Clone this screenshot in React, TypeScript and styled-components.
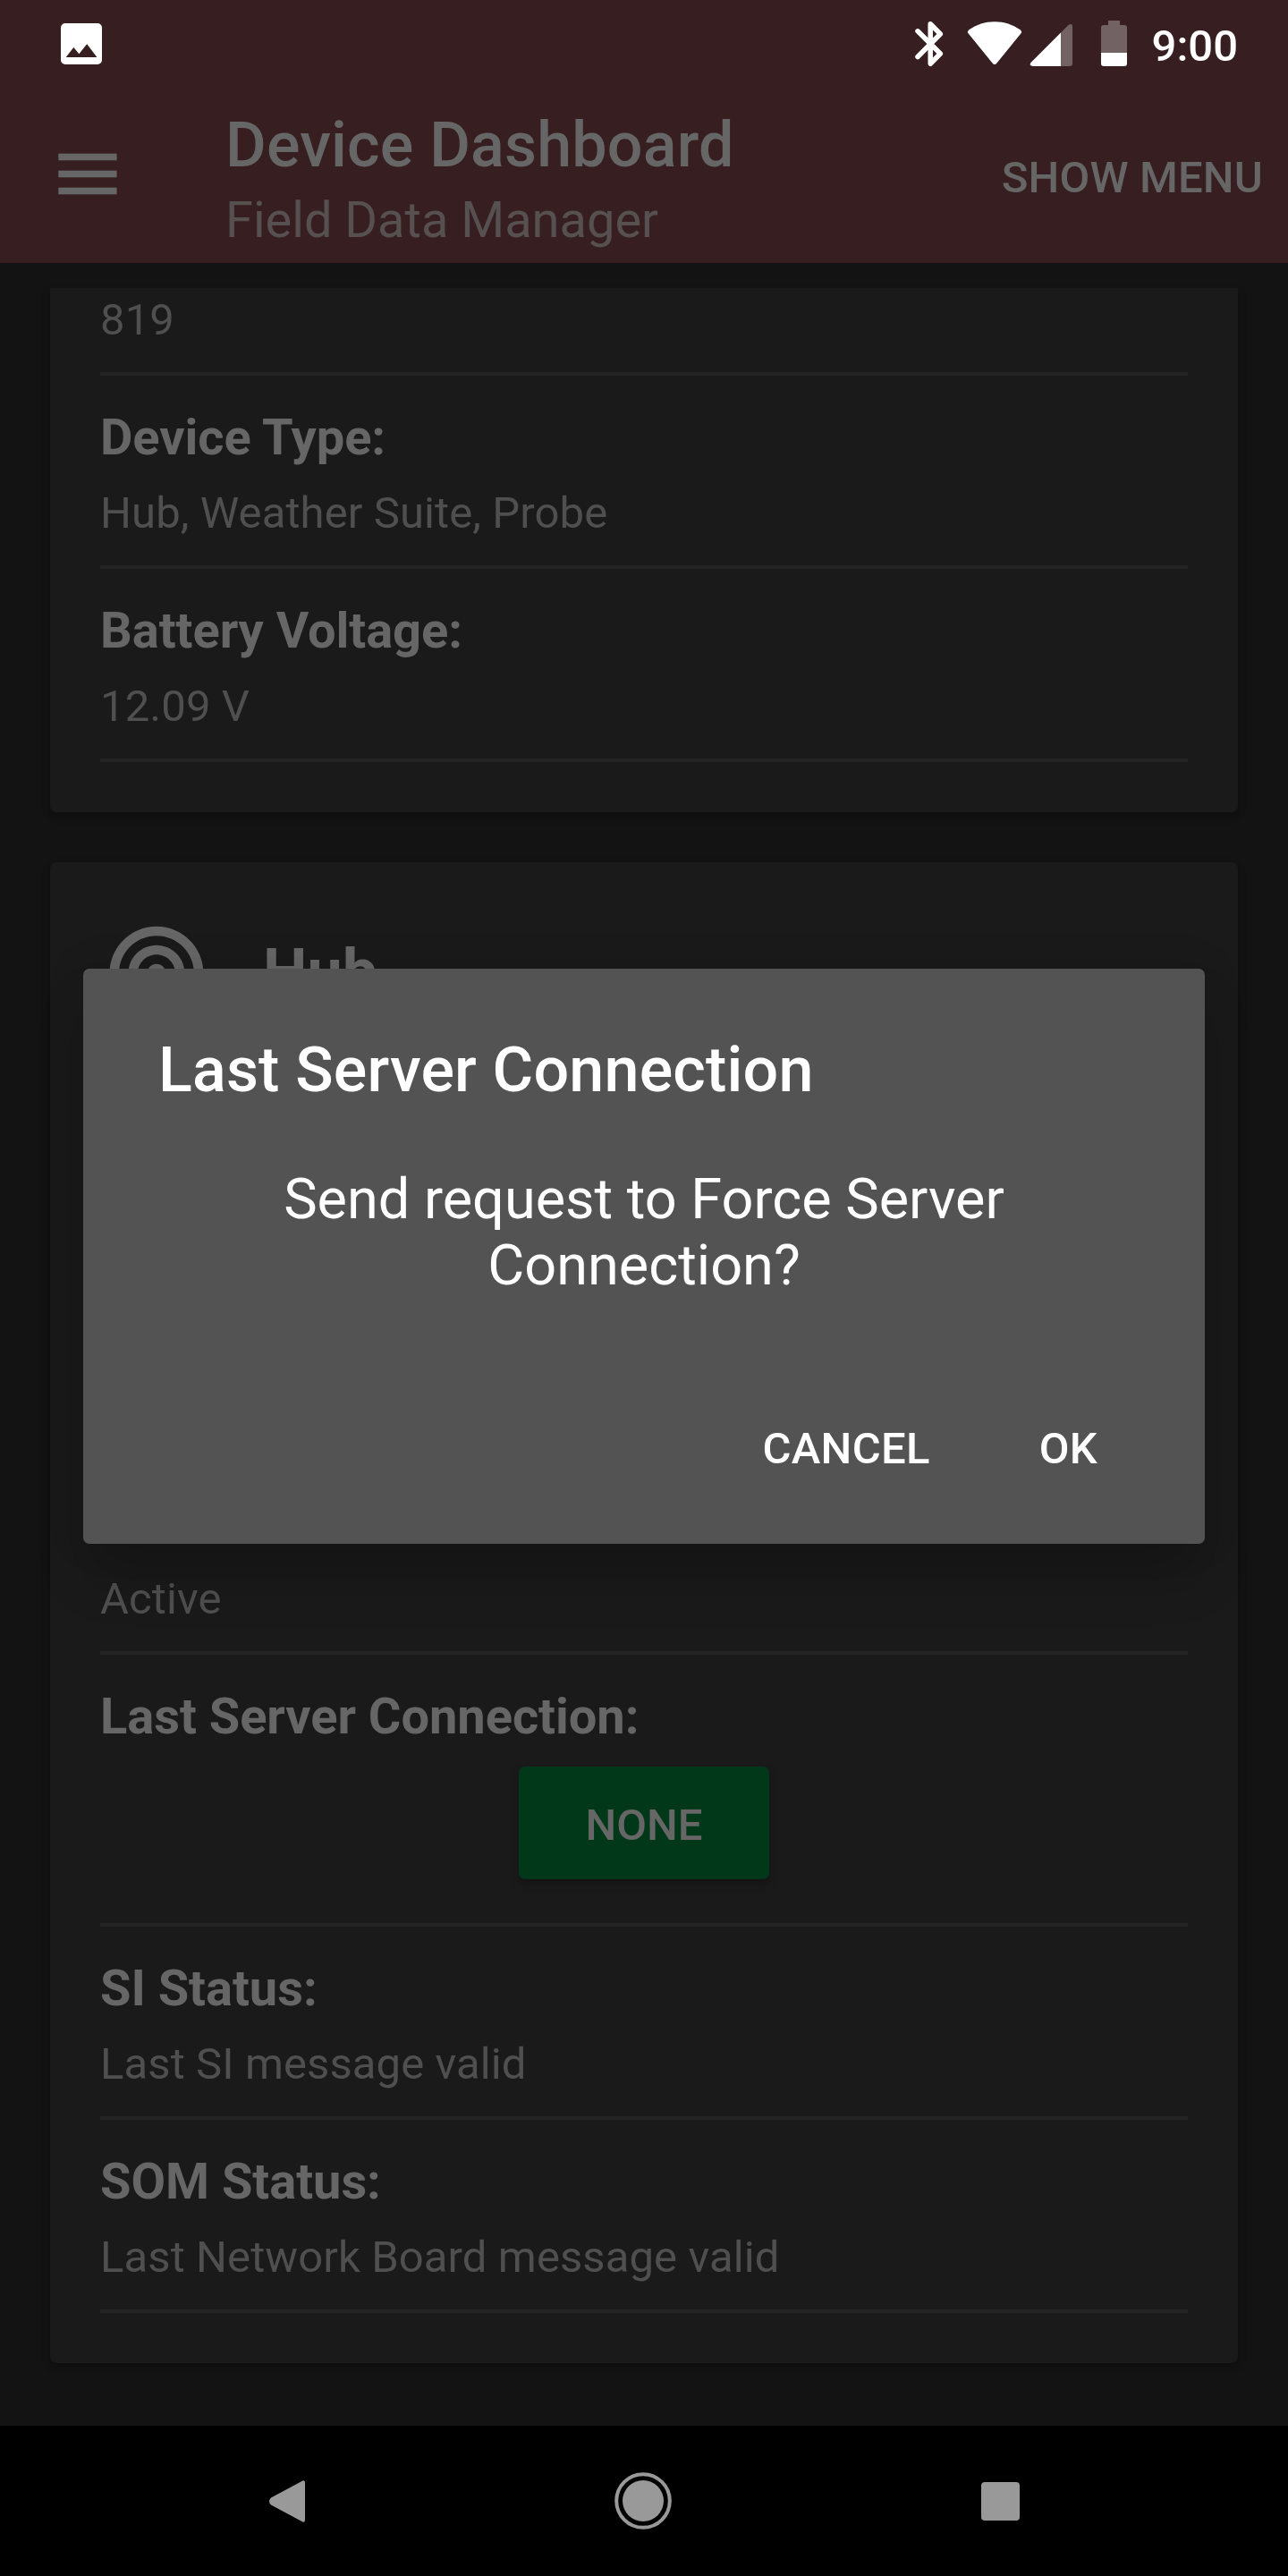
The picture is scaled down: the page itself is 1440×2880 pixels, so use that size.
import React from "react";
import styled, { createGlobalStyle } from "styled-components";
import { MdWifiTethering } from "react-icons/md";

const GlobalStyle = createGlobalStyle`
  html, body { margin: 0; padding: 0; background: #131313; }
  * { box-sizing: border-box; }
  button { font: inherit; border: 0; background: none; padding: 0; margin: 0; }
`;

const Screen = styled.div`
  position: relative;
  width: 1440px;
  height: 2880px;
  overflow: hidden;
  display: flex;
  flex-direction: column;
  background: #131313;
  font-family: Roboto, "Noto Sans", sans-serif;
  font-size: 49px;
  color: #666;
`;

const StatusBar = styled.div`
  height: 98px;
  flex: none;
  display: flex;
  align-items: flex-start;
  justify-content: space-between;
  padding: 0 56px 0 68px;
  background: #371f21;
  color: #fff;
`;

const StatusIcons = styled.div`
  display: flex;
  align-items: flex-start;
`;

const Clock = styled.span`
  margin-left: 26px;
  padding-top: 23px;
  font-size: 49px;
  line-height: 58px;
  font-weight: 500;
  color: #fff;
`;

const Toolbar = styled.header`
  height: 196px;
  flex: none;
  display: flex;
  align-items: flex-start;
  padding: 0 28px 0 65px;
  background: #371f21;
`;

const MenuButton = styled.button`
  width: 187px;
  padding-top: 73px;
  display: flex;
`;

const Titles = styled.div`
  flex: 1;
  padding-top: 23px;
`;

const Title = styled.h1`
  margin: 0;
  font-size: 70px;
  line-height: 82px;
  font-weight: 500;
  letter-spacing: 0.2px;
  color: #666;
`;

const Subtitle = styled.div`
  margin-top: 10px;
  font-size: 56px;
  line-height: 66px;
  color: #575050;
`;

const ShowMenu = styled.button`
  padding-top: 72px;
  font-size: 49px;
  line-height: 58px;
  font-weight: 500;
  letter-spacing: 0.15px;
  color: #666;
`;

const Content = styled.main`
  flex: 1;
  display: flex;
  flex-direction: column;
  gap: 56px;
  padding: 28px 56px 0;
`;

const Card = styled.section<{ $clipped?: boolean }>`
  display: flex;
  flex-direction: column;
  padding: ${(p) => (p.$clipped ? "7px" : "56px")} 56px 56px;
  border-radius: ${(p) => (p.$clipped ? "0 0 7px 7px" : "7px")};
  background: #1a1a1a;
  box-shadow: 0 4px 10px rgba(0, 0, 0, 0.3);
`;

const CardHeader = styled.div`
  height: 126px;
  margin-bottom: 613px;
  display: flex;
  gap: 56px;
  color: #666;
`;

const CardTitle = styled.h2`
  margin: 0;
  padding-top: 25px;
  font-size: 70px;
  line-height: 82px;
  font-weight: 700;
`;

const Field = styled.div<{ $short?: boolean }>`
  display: flex;
  flex-direction: column;
  gap: 23px;
  padding: ${(p) => (p.$short ? "0" : "36px")} 0 29px;
  border-bottom: 4px solid #242424;
`;

const ActionField = styled(Field)`
  padding-bottom: 49px;
`;

const Label = styled.div`
  font-size: 56px;
  line-height: 66px;
  font-weight: 700;
  letter-spacing: -0.04px;
  color: #666;
`;

const Value = styled.div`
  font-size: 49px;
  line-height: 58px;
  letter-spacing: 0.1px;
  color: #4f4f4f;
`;

const GreenButton = styled.button`
  align-self: center;
  width: 280px;
  height: 126px;
  padding-top: 4px;
  border-radius: 7px;
  background: #003819;
  font-size: 49px;
  font-weight: 500;
  color: #666;
  box-shadow: 0 5px 8px rgba(0, 0, 0, 0.25);
`;

const NavBar = styled.nav`
  height: 168px;
  flex: none;
  display: flex;
  align-items: center;
  justify-content: space-between;
  padding: 0 300px 0 301px;
  background: #000;
`;

const Dialog = styled.div`
  position: absolute;
  left: 93px;
  top: 1083px;
  width: 1254px;
  height: 643px;
  display: flex;
  flex-direction: column;
  padding: 72px 84px 0;
  border-radius: 7px;
  background: #535353;
  color: #fff;
  box-shadow: 0 40px 60px -6px rgba(0, 0, 0, 0.2), 0 0 50px rgba(0, 0, 0, 0.08);
`;

const DialogTitle = styled.h2`
  margin: 0;
  font-size: 70px;
  line-height: 82px;
  font-weight: 500;
  letter-spacing: 0.18px;
`;

const Message = styled.p`
  margin: 67px 0 0;
  font-size: 63px;
  line-height: 73.5px;
  text-align: center;
`;

const Actions = styled.div`
  display: flex;
  justify-content: flex-end;
  gap: 122px;
  margin-top: 140px;
  padding-right: 36px;
`;

const TextButton = styled.button`
  font-size: 49px;
  line-height: 58px;
  font-weight: 500;
  letter-spacing: 0.3px;
  color: #fff;
`;

const deviceFields = [
  { label: "Device Type:", value: "Hub, Weather Suite, Probe" },
  { label: "Battery Voltage:", value: "12.09 V" },
];

const statusFields = [
  { label: "SI Status:", value: "Last SI message valid" },
  { label: "SOM Status:", value: "Last Network Board message valid" },
];

function PhotoIcon() {
  return (
    <svg width="46" height="98" viewBox="68 0 46 98">
      <path
        fill="#fff"
        fillRule="evenodd"
        d="M73 26H109a5 5 0 0 1 5 5V67a5 5 0 0 1-5 5H73a5 5 0 0 1-5-5V31a5 5 0 0 1 5-5ZM73.7 64H108.4L97.2 49.3 88.4 60.3 82.3 53Z"
      />
    </svg>
  );
}

function SignalIcons() {
  return (
    <svg width="240" height="98" viewBox="1022 0 240 98" fill="#fff">
      <path
        d="M1026 34.800 1051.300 60 1040.200 71.300V26.700L1051.300 38 1026 63.500"
        fill="none"
        stroke="#fff"
        strokeWidth="5.500"
        strokeLinejoin="round"
        strokeLinecap="round"
      />
      <path d="M1083 33.500C1100 21 1124 21 1141 33.500Q1143 35.500 1141.300 37.500L1114.500 70.500Q1112 73.500 1109.500 70.500L1082.700 37.500Q1081 35.500 1083 33.500Z" />
      <path
        opacity="0.3"
        d="M1186 36.500 1194.500 28Q1199 25 1199 30V71Q1199 74 1196 74H1186Z"
      />
      <path d="M1186 36.500V74H1155Q1150 73.500 1152.500 70Z" />
      <path
        opacity="0.3"
        d="M1239 23H1252V28H1257Q1260 28 1260 31V59H1231V31Q1231 28 1234 28H1239Z"
      />
      <path d="M1231 59H1260V71Q1260 74 1257 74H1234Q1231 74 1231 71Z" />
    </svg>
  );
}

function MenuIcon() {
  return (
    <svg width="66" height="47" viewBox="0 0 66 47" fill="#666">
      <rect x="0.300" y="0.700" width="65.300" height="7.600" />
      <rect x="0.300" y="19.700" width="65.300" height="7.600" />
      <rect x="0.300" y="38.700" width="65.300" height="7.600" />
    </svg>
  );
}

export default function App() {
  return (
    <>
      <GlobalStyle />
      <Screen>
        <StatusBar>
          <PhotoIcon />
          <StatusIcons>
            <SignalIcons />
            <Clock>9:00</Clock>
          </StatusIcons>
        </StatusBar>
        <Toolbar>
          <MenuButton aria-label="Menu">
            <MenuIcon />
          </MenuButton>
          <Titles>
            <Title>Device Dashboard</Title>
            <Subtitle>Field Data Manager</Subtitle>
          </Titles>
          <ShowMenu>SHOW MENU</ShowMenu>
        </Toolbar>
        <Content>
          <Card $clipped>
            <Field $short>
              <Value>819</Value>
            </Field>
            {deviceFields.map((f) => (
              <Field key={f.label}>
                <Label>{f.label}</Label>
                <Value>{f.value}</Value>
              </Field>
            ))}
          </Card>
          <Card>
            <CardHeader>
              <MdWifiTethering size={126} />
              <CardTitle>Hub</CardTitle>
            </CardHeader>
            <Field $short>
              <Value>Active</Value>
            </Field>
            <ActionField>
              <Label>Last Server Connection:</Label>
              <GreenButton>NONE</GreenButton>
            </ActionField>
            {statusFields.map((f) => (
              <Field key={f.label}>
                <Label>{f.label}</Label>
                <Value>{f.value}</Value>
              </Field>
            ))}
          </Card>
        </Content>
        <NavBar>
          <svg width="40" height="47" viewBox="0 0 40 47" fill="#999">
            <path d="M36 1.200Q40-1.500 40 3.500V43.500Q40 48.500 36 45.800L2 27.500Q-2 23.500 2 19.500Z" />
          </svg>
          <svg width="64" height="64" viewBox="0 0 64 64">
            <circle cx="32" cy="32" r="29.800" fill="none" stroke="#999" strokeWidth="4" />
            <circle cx="32" cy="32" r="23" fill="#999" />
          </svg>
          <svg width="43" height="43" viewBox="0 0 43 43">
            <rect width="43" height="43" rx="4" fill="#999" />
          </svg>
        </NavBar>
        <Dialog role="dialog">
          <DialogTitle>Last Server Connection</DialogTitle>
          <Message>
            Send request to Force Server
            <br />
            Connection?
          </Message>
          <Actions>
            <TextButton>CANCEL</TextButton>
            <TextButton>OK</TextButton>
          </Actions>
        </Dialog>
      </Screen>
    </>
  );
}
